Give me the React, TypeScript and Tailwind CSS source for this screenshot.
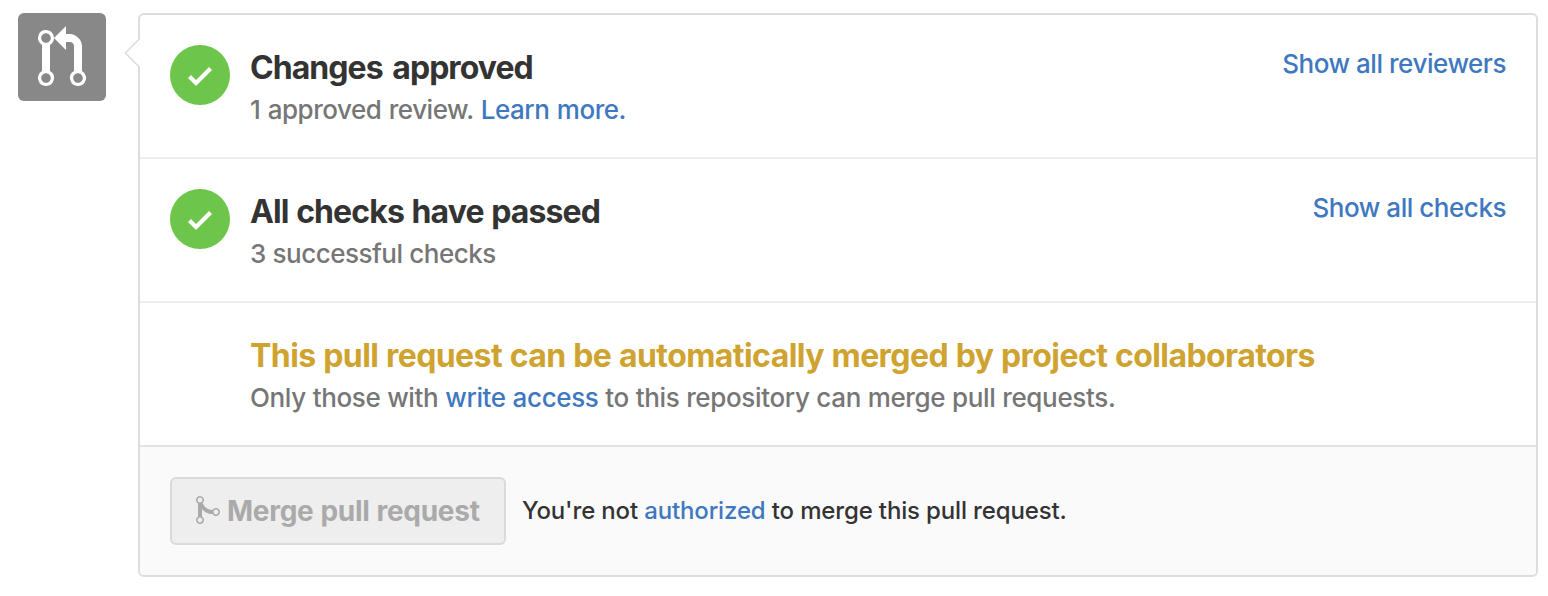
import React from 'react';

function Check() {
  return (
    <span className="flex size-[60px] shrink-0 items-center justify-center rounded-full bg-[#6ec54b] pt-[2px]">
      <svg width="24" height="32" viewBox="0 0 12 16" fill="#fff"><path d="M12 5l-8 8-4-4 1.5-1.5L4 10l6.5-6.5z" /></svg>
    </span>
  );
}

function Link({ children }: { children: React.ReactNode }) {
  return <a href="#" className="text-[#4078c0]">{children}</a>;
}

export default function App() {
  return (
    <div className="flex h-[596px] w-[1548px] bg-white pl-[18px] pt-[13px] font-['Inter',sans-serif] font-medium text-[#767676]">
      <div className="flex h-[88px] w-[88px] shrink-0 items-center justify-center rounded-[6px] bg-[#888] pt-[2px]">
        <svg width="48" height="64" viewBox="0 0 12 16" fill="#fff"><path d="M11 11.28V5c-.03-.78-.34-1.47-.94-2.06C9.46 2.35 8.78 2.03 8 2H7V0L4 3l3 3V4h1c.27.02.48.11.69.31.21.2.3.42.31.69v6.28A1.993 1.993 0 0 0 10 15a1.993 1.993 0 0 0 1-3.72zm-1 2.92c-.66 0-1.2-.55-1.2-1.2 0-.65.55-1.2 1.2-1.2.65 0 1.2.55 1.2 1.2 0 .65-.55 1.2-1.2 1.2zM4 3c0-1.11-.89-2-2-2a1.993 1.993 0 0 0-1 3.72v6.56A1.993 1.993 0 0 0 2 15a1.993 1.993 0 0 0 1-3.72V4.72c.59-.34 1-.98 1-1.72zm-.8 10c0 .66-.55 1.2-1.2 1.2-.65 0-1.2-.55-1.2-1.2 0-.65.55-1.2 1.2-1.2.65 0 1.2.55 1.2 1.2zM2 4.2C1.34 4.2.8 3.65.8 3c0-.65.55-1.2 1.2-1.2.65 0 1.2.55 1.2 1.2 0 .65-.55 1.2-1.2 1.2z" /></svg>
      </div>
      <main className="relative ml-8 h-[564px] w-[1400px] rounded-[6px] border-2 border-[#ddd]">
        <svg className="absolute -left-4 top-[22px]" width="17" height="32" viewBox="0 0 17 32"><path d="M16 2v28L1.6 16z" fill="#fff" /><path d="M15.5 2v28" stroke="#fff" strokeWidth="3" /><path d="M15.5 1.8L1.3 16l14.2 14.2" fill="none" stroke="#ddd" strokeWidth="1.6" /></svg>
        <section className="flex h-[144px] border-b-2 border-[#eee] px-[30px] pt-[30px]">
          <Check />
          <div className="ml-5 grow">
            <h2 className="h-[46px] text-[32px] font-bold leading-[46px] tracking-[-0.95px] text-[#333] [word-spacing:3px]">Changes approved</h2>
            <p className="text-[26px] leading-[38px] tracking-[-0.47px] [word-spacing:0.9px]">1 approved review. <Link>Learn more.</Link></p>
          </div>
          <p className="text-[26px] leading-[38px] tracking-[-0.46px]"><Link>Show all reviewers</Link></p>
        </section>
        <section className="flex h-[144px] border-b-2 border-[#eee] px-[30px] pt-[30px]">
          <Check />
          <div className="ml-5 grow">
            <h2 className="h-[46px] text-[32px] font-bold leading-[46px] tracking-[-0.89px] text-[#333] [word-spacing:0.9px]">All checks have passed</h2>
            <p className="text-[26px] leading-[38px] tracking-[-0.5px] [word-spacing:0.3px]">3 successful checks</p>
          </div>
          <p className="text-[26px] leading-[38px] tracking-[-0.46px]"><Link>Show all checks</Link></p>
        </section>
        <section className="h-[142px] pl-[110px] pt-[30px]">
          <h2 className="h-[46px] text-[32px] font-bold leading-[46px] tracking-[-0.57px] text-[#cfa330] [word-spacing:0.6px]">This pull request can be automatically merged by project collaborators</h2>
          <p className="text-[26px] leading-[38px] tracking-[-0.35px] [word-spacing:0.2px]">Only those with <Link>write access</Link> to this repository can merge pull requests.</p>
        </section>
        <footer className="flex h-[130px] items-center rounded-b-[4px] border-t-2 border-[#e3e3e3] bg-[#fafafa] px-[30px]">
          <button className="flex h-[68px] w-[336px] items-center rounded-[6px] border-2 border-[#dadada] bg-[#eee] pl-[24px] text-[28px] font-bold tracking-[-0.28px] text-[#aaa] [word-spacing:0.6px]">
            <svg className="mr-[7px] mb-[2px]" width="24" height="32" viewBox="0 0 12 16" fill="currentColor"><path d="M10 7c-.73 0-1.38.41-1.73 1.02V8C7.22 7.98 6 7.64 5.14 6.98c-.75-.58-1.5-1.61-1.89-2.44A1.993 1.993 0 0 0 2 .99C.89.99 0 1.89 0 3a2 2 0 0 0 1 1.72v6.56c-.59.35-1 .99-1 1.72 0 1.11.89 2 2 2a1.993 1.993 0 0 0 1-3.72V7.67c.67.7 1.44 1.27 2.3 1.69.86.42 2.03.63 2.97.64v-.02c.36.61 1 1.02 1.73 1.02 1.11 0 2-.89 2-2 0-1.11-.89-2-2-2zm-6.8 6c0 .66-.55 1.2-1.2 1.2-.65 0-1.2-.55-1.2-1.2 0-.65.55-1.2 1.2-1.2.65 0 1.2.55 1.2 1.2zM2 4.2C1.34 4.2.8 3.65.8 3c0-.65.55-1.2 1.2-1.2.65 0 1.2.55 1.2 1.2 0 .65-.55 1.2-1.2 1.2zm8 6c-.66 0-1.2-.55-1.2-1.2 0-.65.55-1.2 1.2-1.2.65 0 1.2.55 1.2 1.2 0 .65-.55 1.2-1.2 1.2z" /></svg>
            <span>Merge pull request</span>
          </button>
          <p className="ml-4 text-[24px] tracking-[-0.15px] text-[#333]">You're not <Link>authorized</Link> to merge this pull request.</p>
        </footer>
      </main>
    </div>
  );
}
